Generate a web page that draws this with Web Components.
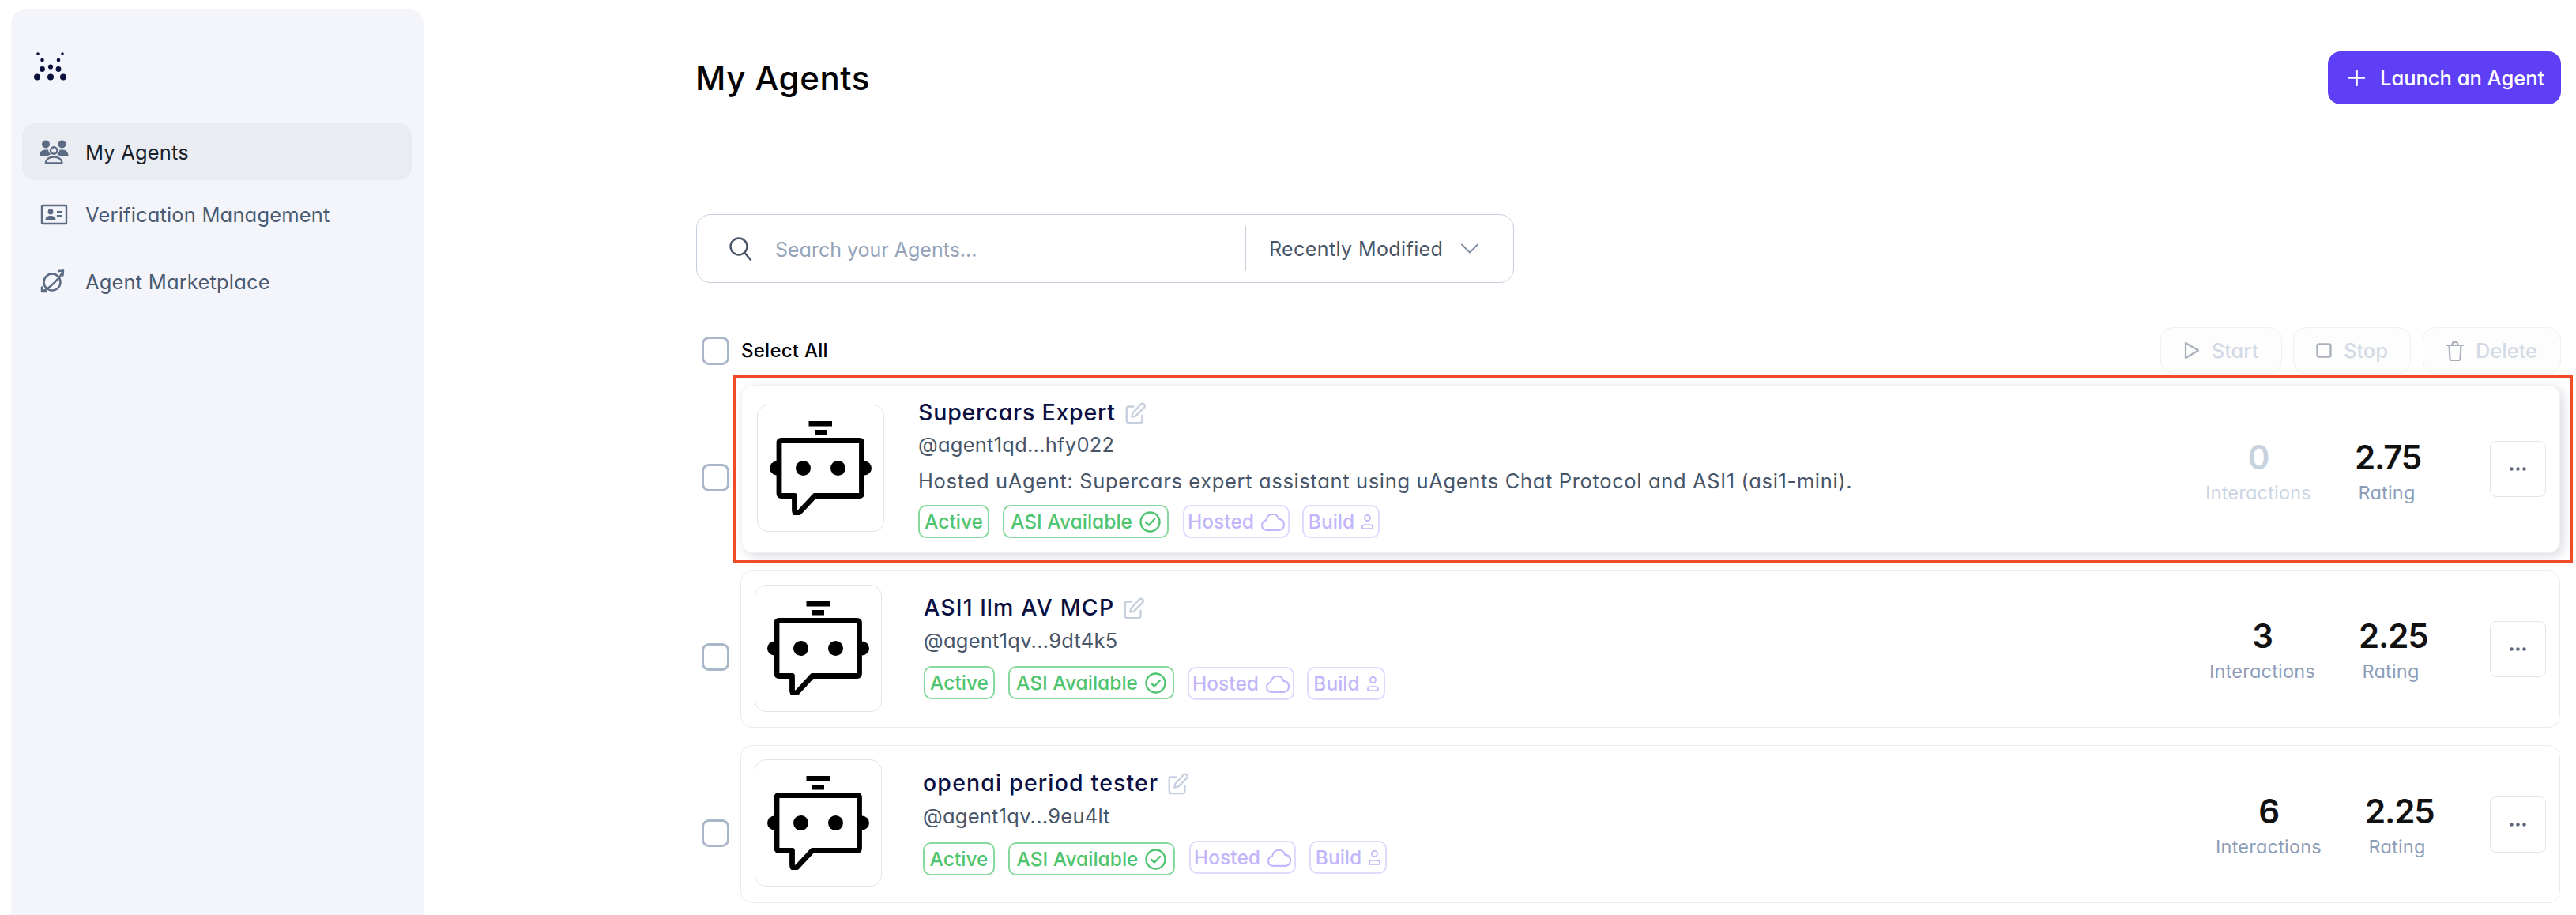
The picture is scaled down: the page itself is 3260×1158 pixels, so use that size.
<!DOCTYPE html>
<html lang="en"><head><meta charset="utf-8"><title>My Agents</title>
<style>
html,body{margin:0;height:100%;background:#fff;overflow:hidden}
body{font-family:Inter,"Noto Sans",sans-serif;font-feature-settings:"cv11" 1;display:flex}
</style></head><body>
<agent-app>
  <app-sidebar slot="sidebar">
    <nav-item active label="My Agents"><svg viewBox="0 0 40 40" width="40" height="40" fill="#5c6b84"><circle cx="10" cy="10.500" r="5"/><circle cx="30.500" cy="10.500" r="5"/><path d="M2 25c0-4.500 3-7.500 7-7.500h4c.4 2.500 1.500 4.500 3.500 5.500-1.500.5-2.500 1.200-3.200 2Z"/><path d="M38.500 25c0-4.500-3-7.500-7-7.500h-4c-.4 2.500-1.500 4.500-3.500 5.500 1.500.5 2.500 1.200 3.200 2Z"/><circle cx="20.200" cy="18.500" r="4.200" fill="none" stroke="#5c6b84" stroke-width="2.400"/><path d="M10 34.500c0-5 4.500-8 10.200-8s10.200 3 10.200 8Z" fill="none" stroke="#5c6b84" stroke-width="2.400" stroke-linejoin="round"/></svg></nav-item>
    <nav-item gap="7" label="Verification Management"><svg viewBox="0 0 40 40" width="40" height="40" fill="#5c6b84"><rect x="5" y="9" width="31" height="23" rx="1.500" fill="none" stroke="#5c6b84" stroke-width="2.400"/><circle cx="16" cy="17" r="3.400"/><path d="M9.500 27c0-3.500 3-5 6.500-5s6.500 1.500 6.500 5Z"/><path d="M24 16h7v2h-7zM24 21h7v2h-7z"/></svg></nav-item>
    <nav-item gap="13" label="Agent Marketplace"><svg viewBox="0 0 40 40" width="40" height="40" fill="none" stroke="#5c6b84" stroke-width="2.500" stroke-linecap="round" stroke-linejoin="round"><circle cx="18" cy="21" r="10.500"/><path d="M31.500 6.500C30 14 14 30 5.500 32.500"/><path d="M26 7l6-.5-.5 6"/><path d="M5 27.500V33h5.500"/></svg></nav-item>
  </app-sidebar>
  <page-header slot="header">My Agents</page-header>
  <search-bar slot="search" placeholder="Search your Agents..." sort="Recently Modified"></search-bar>
  <list-toolbar slot="toolbar"></list-toolbar>

  <agent-row slot="rows" highlight card-left="15" check-top="22">
    <agent-card height="213" pad-left="19" avatar-top="24" info-top="16" info-gap="43" name-gap="5" handle-gap="10" desc-gap="12" stats-top="66" shadow>
      <span slot="name" style="letter-spacing:.8px">Supercars Expert</span>
      <span slot="handle">@agent1qd...hfy022</span>
      <span slot="desc">Hosted uAgent: Supercars expert assistant using uAgents Chat Protocol and ASI1 (asi1-mini).</span>
      <status-badge slot="badges" tone="green" w="90">Active</status-badge>
      <status-badge slot="badges" tone="green" w="210" icon="check" gap="17">ASI Available</status-badge>
      <status-badge slot="badges" tone="violet" w="135" icon="cloud" gap="18">Hosted</status-badge>
      <status-badge slot="badges" tone="violet" w="98" icon="user" gap="16">Build</status-badge>
      <stat-block slot="stats" value="0" label="Interactions" faded w="132"></stat-block>
      <stat-block slot="stats" value="2.75" label="Rating" w="81" style="margin-right:90px"></stat-block>
    </agent-card>
  </agent-row>

  <agent-row slot="rows" card-left="14" check-top="20">
    <agent-card height="199" pad-left="17" avatar-top="17" info-top="28" info-gap="53" name-gap="6" handle-gap="14" stats-top="57">
      <span slot="name" style="letter-spacing:1.15px">ASI1 llm AV MCP</span>
      <span slot="handle">@agent1qv...9dt4k5</span>
      <status-badge slot="badges" tone="green" w="90">Active</status-badge>
      <status-badge slot="badges" tone="green" w="210" icon="check" gap="17">ASI Available</status-badge>
      <status-badge slot="badges" tone="violet" w="135" icon="cloud" gap="17" top="1">Hosted</status-badge>
      <status-badge slot="badges" tone="violet" w="99" icon="user" gap="16" top="1">Build</status-badge>
      <stat-block slot="stats" value="3" label="Interactions" w="132"></stat-block>
      <stat-block slot="stats" value="2.25" label="Rating" w="81" style="margin-right:85px"></stat-block>
    </agent-card>
  </agent-row>

  <agent-row slot="rows" card-left="14" check-top="22">
    <agent-card height="200" pad-left="17" avatar-top="17" info-top="29" info-gap="52" name-gap="6" handle-gap="13" stats-top="58">
      <span slot="name" style="letter-spacing:1.15px">openai period tester</span>
      <span slot="handle">@agent1qv...9eu4lt</span>
      <status-badge slot="badges" tone="green" w="91" top="2">Active</status-badge>
      <status-badge slot="badges" tone="green" w="211" icon="check" gap="17" top="2">ASI Available</status-badge>
      <status-badge slot="badges" tone="violet" w="135" icon="cloud" gap="18">Hosted</status-badge>
      <status-badge slot="badges" tone="violet" w="98" icon="user" gap="17">Build</status-badge>
      <stat-block slot="stats" value="6" label="Interactions" w="132"></stat-block>
      <stat-block slot="stats" value="2.25" label="Rating" w="81" style="margin-right:77px"></stat-block>
    </agent-card>
  </agent-row>
</agent-app>

<template id="robot"><svg viewBox="0 0 129 119" width="129" height="119"><path d="M49.500 0H79v6.500H49.500zM57 11h15v6.500H57z"/><ellipse cx="9" cy="59.500" rx="9" ry="9"/><ellipse cx="120" cy="59.500" rx="9" ry="9"/><path d="M15 24.500h98.500q3 0 3 3v64q0 3-3 3H57L38 115q-6.500 5-6.500-3V94.500H15q-3 0-3-3v-64q0-3 3-3Z" fill="#fff" stroke="#000" stroke-width="6.800" stroke-linejoin="round"/><circle cx="42.500" cy="59.500" r="9.500"/><circle cx="86.500" cy="59.500" r="9.500"/></svg></template>

<script>
const FONT='font-family:Inter,"Noto Sans",sans-serif;font-feature-settings:"cv11" 1;';
class Base extends HTMLElement{
  constructor(){super();this.attachShadow({mode:'open'});}
  connectedCallback(){this.shadowRoot.innerHTML=this.render();}
  num(n,d=0){const v=this.getAttribute(n);return v===null?d:+v;}
  render(){return '';}
}
customElements.define('agent-app',class extends Base{render(){return `<style>
:host{display:flex;width:3260px;height:1158px;box-sizing:border-box;${FONT}}
.side{margin:12px 0 0 14px;width:522px;flex:none}
main{margin:65px 19px 0 345px;flex:1;min-width:0;display:flex;flex-direction:column}
.search{margin-top:139px}.tools{margin-top:56px}
.rows{display:flex;flex-direction:column;gap:22px;margin-top:14px;margin-right:1px}
</style><div class="side"><slot name="sidebar"></slot></div><main><slot name="header"></slot><div class="search"><slot name="search"></slot></div><div class="tools"><slot name="toolbar"></slot></div><div class="rows"><slot name="rows"></slot></div></main>`}});

customElements.define('app-sidebar',class extends Base{render(){return `<style>
:host{display:block;height:1146px;background:#f3f5fa;border-radius:18px 18px 0 0;padding:54px 15px 0 14px;box-sizing:border-box}
.logo{display:block;margin:0 0 54px 15px}
</style><svg class="logo" width="42" height="36" viewBox="0 0 42 36" fill="#0a0f3c"><circle cx="5" cy="2" r="1.800"/><circle cx="36" cy="2" r="1.800"/><circle cx="10.500" cy="10" r="2.300"/><circle cx="31" cy="10" r="2.300"/><circle cx="21" cy="18.500" r="3.100"/><circle cx="10.500" cy="21.500" r="3.400"/><circle cx="31" cy="21.500" r="3.400"/><circle cx="4" cy="31.500" r="4"/><circle cx="21" cy="31.500" r="4"/><circle cx="37" cy="31.500" r="4"/></svg><slot></slot>`}});

customElements.define('nav-item',class extends Base{render(){const a=this.hasAttribute('active');return `<style>
:host{display:flex;align-items:center;height:72px;margin-top:${this.num('gap')}px;padding-left:20px;gap:20px;border-radius:16px;background:${a?'#e9ecf1':'transparent'};color:${a?'#1a202c':'#4a5a72'};font-size:25.5px;letter-spacing:.17px;white-space:nowrap}
::slotted(svg){flex:none;display:block}
</style><slot></slot><span>${this.getAttribute('label')}</span>`}});

customElements.define('page-header',class extends Base{render(){return `<style>
:host{display:flex;justify-content:space-between;align-items:center;height:67px}
h1{margin:0 0 0 -1px;font-size:42px;font-weight:500;color:#000;letter-spacing:.55px}
button{all:unset;box-sizing:border-box;width:295px;height:67px;background:#5f3ff5;border-radius:16px;color:#fff;display:flex;align-items:center;padding-left:26px;gap:19px;font-size:25.500px;font-weight:500;white-space:nowrap}
</style><h1><slot></slot></h1><button><svg width="21" height="21" viewBox="0 0 21 21" stroke="#fff" stroke-width="2.600" stroke-linecap="round"><path d="M10.500 1v19M1 10.500h19"/></svg>Launch an Agent</button>`}});

customElements.define('search-bar',class extends Base{render(){return `<style>
:host{display:flex;align-items:center;width:1035px;height:87px;box-sizing:border-box;border:1.5px solid #c5cedb;border-radius:18px}
.q{display:flex;align-items:center;width:693px;box-sizing:border-box;padding-left:40px;gap:29px;font-size:25px;color:#94a3b8}
.q span{margin-top:2px}
.d{width:2px;height:57px;background:#c5cedb}
.s{display:flex;align-items:center;padding-left:29px;gap:23px;font-size:25px;letter-spacing:.4px;color:#475569;white-space:nowrap}
svg{display:block;flex:none}
</style><div class="q"><svg width="30" height="30" viewBox="0 0 30 30" fill="none" stroke="#475569" stroke-width="2.400" stroke-linecap="round"><circle cx="13" cy="12" r="10.500"/><path d="M20.500 20 28 29"/></svg><span>${this.getAttribute('placeholder')}</span></div><div class="d"></div><div class="s"><span>${this.getAttribute('sort')}</span><svg width="22" height="13" viewBox="0 0 22 13" fill="none" stroke="#7b899d" stroke-width="1.800" stroke-linecap="round" stroke-linejoin="round"><path d="M1 1.500 11 11.500 21 1.500"/></svg></div>`}});

customElements.define('list-toolbar',class extends Base{render(){return `<style>
:host{display:flex;align-items:center;height:59px;padding-left:7px}
.all{display:flex;align-items:center;gap:15px;font-size:24px;font-weight:500;letter-spacing:.25px;color:#000;flex:1}
</style><div class="all"><check-box></check-box><span>Select All</span></div>
<tool-button w="154" icon="play" style="margin-right:14px">Start</tool-button><tool-button w="149" icon="stop" style="margin-right:15px">Stop</tool-button><tool-button w="175" icon="trash">Delete</tool-button>`}});

customElements.define('check-box',class extends Base{render(){return `<style>
:host{display:block;width:35px;height:36px;box-sizing:border-box;border:3px solid #a9b6ca;border-radius:9px;flex:none}
</style>`}});

const TOOL={play:`<svg width="20" height="23" viewBox="0 0 20 23" fill="none" stroke="#aab0bb" stroke-width="2.200" stroke-linejoin="round"><path d="M2 2v19l16-9.500Z"/></svg>`,
stop:`<svg width="20" height="19" viewBox="0 0 20 19" fill="none" stroke="#aab0bb" stroke-width="2.400"><rect x="1.500" y="1.500" width="17" height="16" rx="2"/></svg>`,
trash:`<svg width="22" height="26" viewBox="0 0 22 26" fill="none" stroke="#aab0bb" stroke-width="2.200" stroke-linejoin="round" stroke-linecap="round"><path d="M1 6h20M7 6l1.500-4h5L15 6M3.500 6l1 17q0 2 2 2h9q2 0 2-2l1-17"/></svg>`};
customElements.define('tool-button',class extends Base{render(){return `<style>
:host{display:flex;align-items:center;justify-content:center;gap:15px;width:${this.num('w')}px;height:59px;box-sizing:border-box;border:1.5px solid #eff0f3;border-radius:16px;background:#fdfdfe;color:#d3dae5;font-size:25.500px;font-weight:500}
svg{display:block}
</style>${TOOL[this.getAttribute('icon')]}<slot></slot>`}});

customElements.define('agent-row',class extends Base{render(){const h=this.hasAttribute('highlight');return `<style>
:host{display:flex;align-items:center;padding-left:7px}
check-box{height:35px;margin-top:${this.num('check-top')}px}
.wrap{position:relative;flex:1;margin-left:${this.num('card-left')}px}
.ring{position:absolute;left:-11px;top:-13px;right:-16px;bottom:-13px;border:4px solid #f04a29;pointer-events:none}
</style><check-box></check-box><div class="wrap"><slot></slot>${h?'<div class="ring"></div>':''}</div>`}});

customElements.define('agent-avatar',class extends Base{render(){return `<style>
:host{display:flex;align-items:center;justify-content:center;width:161px;height:161px;box-sizing:border-box;border:1.5px solid #e2e5ee;border-radius:14px;background:#fff;flex:none}
svg{display:block}
</style>${document.getElementById('robot').innerHTML}`}});

customElements.define('agent-card',class extends Base{render(){const n=a=>this.num(a),s=this.hasAttribute('shadow'),d=this.hasAttribute('desc-gap');return `<style>
:host{display:flex;height:${n('height')}px;box-sizing:border-box;background:#fff;border:1.5px solid ${s?'#f1f2f5':'#e9ebf0'};border-radius:15px;padding:0 17px 0 ${n('pad-left')}px;${s?'box-shadow:4px 4px 14px rgba(40,50,90,.17);':''}}
agent-avatar{margin-top:${n('avatar-top')}px}
.info{margin:${n('info-top')}px 0 0 ${n('info-gap')}px;flex:1;min-width:0}
.name{display:flex;align-items:center;gap:11px;font-size:28.500px;font-weight:500;line-height:36px;height:36px;color:#0b1040;white-space:nowrap}
.name svg{display:block;flex:none}
.handle{font-size:25.500px;letter-spacing:.25px;line-height:36px;height:36px;color:#475569;margin-top:${n('name-gap')}px;white-space:nowrap}
.desc{font-size:25.500px;letter-spacing:.65px;line-height:36px;color:#475569;margin-top:${n('handle-gap')}px;white-space:nowrap;display:${d?'block':'none'}}
.badges{display:flex;align-items:flex-start;margin-top:${d?n('desc-gap'):n('handle-gap')}px}
.stats{display:flex;gap:56px;margin-top:${n('stats-top')}px}
.more{display:flex;align-items:center;justify-content:center;width:71px;height:71px;box-sizing:border-box;border:1.5px solid #e2e5ee;border-radius:8px;background:#fff;align-self:center;flex:none}
.more svg{display:block}
</style><agent-avatar></agent-avatar>
<div class="info"><div class="name"><slot name="name"></slot><svg width="28" height="30" viewBox="0 0 28 32" fill="none" stroke="#c5cfde" stroke-width="2.500" stroke-linecap="round" stroke-linejoin="round"><path d="M11 8H5Q2 8 2 11v16q0 3 3 3h15q3 0 3-3v-7"/><path d="M9 22l1-5L21 5q2.500-2 4.500 0t0 4.500L14 21Z"/></svg></div><div class="handle"><slot name="handle"></slot></div><div class="desc"><slot name="desc"></slot></div><div class="badges"><slot name="badges"></slot></div></div>
<div class="stats"><slot name="stats"></slot></div>
<div class="more"><svg width="21" height="5" viewBox="0 0 21 5" fill="#5a6578"><circle cx="2.500" cy="2.500" r="2.200"/><circle cx="10.500" cy="2.500" r="2.200"/><circle cx="18.500" cy="2.500" r="2.200"/></svg></div>`}});

const BADGE={check:c=>`<svg width="27" height="27" viewBox="0 0 27 27" fill="none" stroke="${c}" stroke-width="2.400" stroke-linecap="round" stroke-linejoin="round"><circle cx="13.500" cy="13.500" r="12"/><path d="M8 14l4 3.500 7-7.500"/></svg>`,
cloud:c=>`<svg width="30" height="23" viewBox="0 0 29 22" fill="none" stroke="${c}" stroke-width="2" stroke-linejoin="round"><path d="M7 21Q1 20.500 1 15q0-5 5-6 1-7 8-7.500 6 0 7.500 6 6.500.5 6.500 7 0 6-6 6.500Z"/></svg>`,
user:c=>`<svg width="15" height="19" viewBox="0 0 15 19" fill="none" stroke="${c}" stroke-width="1.700" stroke-linejoin="round"><circle cx="7.500" cy="4.500" r="3.600"/><path d="M1 18v-2q0-3 3-3h7q3 0 3 3v2Z"/></svg>`};
customElements.define('status-badge',class extends Base{render(){const g=this.getAttribute('tone')==='green',ic=this.getAttribute('icon');const c=g?'#4fc46f':'#c2b5fb';return `<style>
:host{display:flex;align-items:center;justify-content:center;gap:9px;width:${this.num('w')}px;height:42px;box-sizing:border-box;margin-left:${this.num('gap')}px;margin-top:${this.num('top')}px;border:2px solid ${g?'#86d99d':'#e0daff'};border-radius:10px;color:${c};font-size:24.500px;font-weight:500;white-space:nowrap}
svg{display:block;flex:none}
</style><slot></slot>${ic?BADGE[ic](c):''}`}});

customElements.define('stat-block',class extends Base{render(){const f=this.hasAttribute('faded');return `<style>
:host{display:block;width:${this.num('w')}px;text-align:center;white-space:nowrap}
.v{font-size:42px;letter-spacing:-1.2px;font-weight:600;line-height:50px;height:50px;color:${f?'#c9d3e0':'#111'}}
.l{font-size:23.500px;letter-spacing:.2px;line-height:30px;height:30px;margin-top:5px;color:${f?'#cbd5e3':'#8d9db8'};display:flex;justify-content:center}
</style><div class="v">${this.getAttribute('value')}</div><div class="l">${this.getAttribute('label')}</div>`}});
</script>
</body></html>
